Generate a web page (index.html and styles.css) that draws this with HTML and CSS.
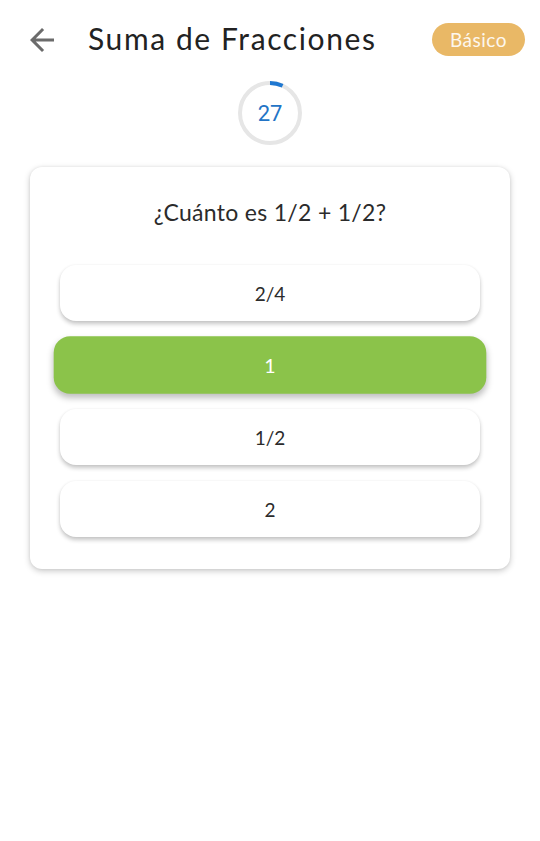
FILE: index.html
```html
<!DOCTYPE html>
<html lang="es">
<head>
<meta charset="utf-8">
<link rel="stylesheet" href="styles.css">
</head>
<body>
<div class="screen">
  <header class="topbar">
    <button class="back" aria-label="Volver">
      <svg viewBox="0 0 24 24" width="36" height="36"><path d="M20 11H7.83l5.59-5.59L12 4l-8 8 8 8 1.41-1.41L7.83 13H20v-2z" fill="#6b6b6b"/></svg>
    </button>
    <h1 class="title">Suma de Fracciones</h1>
    <span class="badge">Básico</span>
  </header>
  <div class="timer">
    <svg class="ring" viewBox="0 0 64 64" width="64" height="64">
      <circle cx="32" cy="32" r="30" fill="none" stroke="#e6e6e6" stroke-width="4"/>
      <circle cx="32" cy="32" r="30" fill="none" stroke="#1f78d1" stroke-width="4" stroke-dasharray="13 200" transform="rotate(-90 32 32)"/>
    </svg>
    <span class="time">27</span>
  </div>
  <main class="card">
    <p class="question">¿Cuánto es 1/2 + 1/2?</p>
    <div class="options">
      <div class="option">2/4</div>
      <div class="option selected">1</div>
      <div class="option">1/2</div>
      <div class="option">2</div>
    </div>
  </main>
</div>
</body>
</html>
```
FILE: styles.css
```css
* { box-sizing: border-box; }
html, body { margin: 0; padding: 0; background: #fff; }
body { font-family: "Lato", "Noto Sans", sans-serif; color: #262626; }
.screen { width: 540px; min-height: 841px; }
.topbar {
  display: flex;
  align-items: center;
  height: 78px;
  padding: 2px 15px 0 24px;
}
.back {
  border: 0; background: none; padding: 0; margin: 0;
  width: 36px; height: 36px; display: flex;
}
.title {
  margin: -4px 0 0 28px;
  font-size: 30px;
  font-weight: 400;
  letter-spacing: 1.6px;
  color: #222;
  flex: 1;
}
.badge {
  background: #e9b866;
  color: #fdf7ee;
  font-size: 19px;
  padding: 0 18px;
  height: 33px;
  line-height: 33px;
  border-radius: 17px;
  letter-spacing: 0.5px;
  margin-top: -2px;
}
.timer {
  position: relative;
  width: 64px; height: 64px;
  margin: 3px auto 0;
  display: flex; align-items: center; justify-content: center;
}
.ring { position: absolute; left: 0; top: 0; }
.time {
  font-family: "Roboto", sans-serif;
  font-size: 22px;
  color: #2374c6;
  position: relative;
}
.card {
  margin: 22px 30px 0;
  background: #fff;
  border-radius: 12px;
  box-shadow: 0 2px 6px rgba(0,0,0,0.22), 0 0 3px rgba(0,0,0,0.06);
  padding: 30px 30px 32px;
}
.question {
  margin: 0;
  text-align: center;
  font-size: 23px;
  color: #2b2b2b;
  line-height: 30px;
  letter-spacing: 0.3px;
}
.options {
  margin-top: 38px;
  display: flex;
  flex-direction: column;
  gap: 16px;
}
.option {
  height: 56px;
  border-radius: 16px;
  background: #fff;
  display: flex; align-items: center; justify-content: center;
  font-size: 19px;
  color: #2b2b2b;
  box-shadow: 0 3px 4px rgba(0,0,0,0.22), 0 0 3px rgba(0,0,0,0.05);
}
.option.selected {
  background: #8bc34a;
  color: #fff;
  transform: scale(1.03);
  box-shadow: 0 4px 6px rgba(0,0,0,0.25);
}
```
